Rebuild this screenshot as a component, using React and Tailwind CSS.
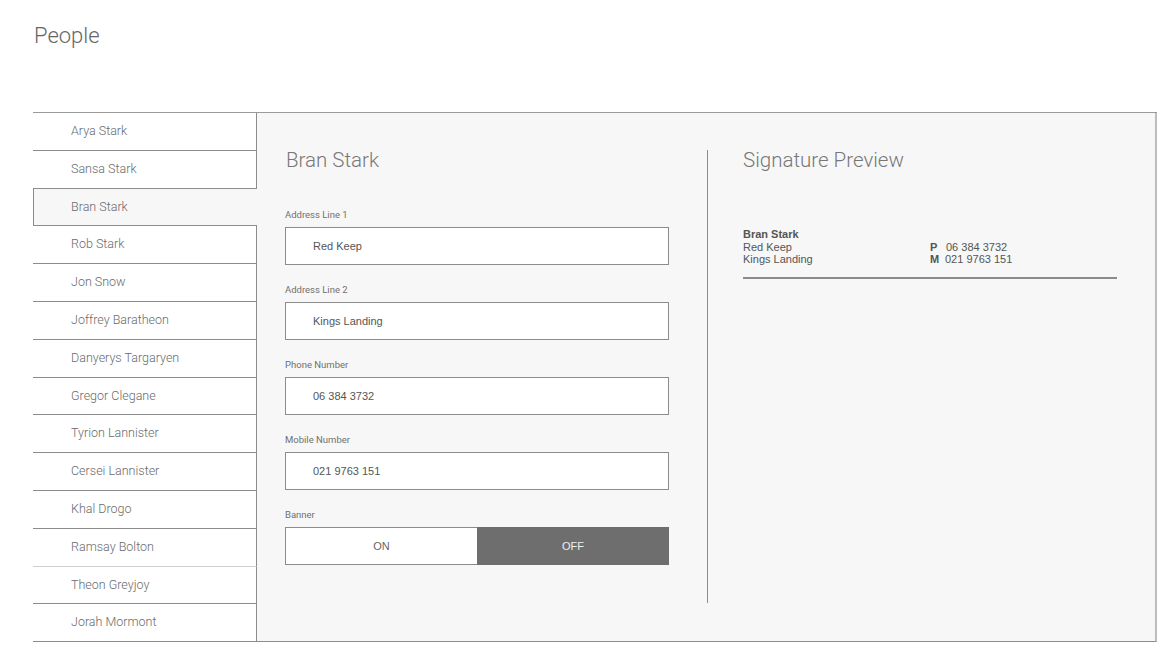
const people = [
  'Arya Stark',
  'Sansa Stark',
  'Bran Stark',
  'Rob Stark',
  'Jon Snow',
  'Joffrey Baratheon',
  'Danyerys Targaryen',
  'Gregor Clegane',
  'Tyrion Lannister',
  'Cersei Lannister',
  'Khal Drogo',
  'Ramsay Bolton',
  'Theon Greyjoy',
  'Jorah Mormont',
];

const fields = [
  { label: 'Address Line 1', value: 'Red Keep' },
  { label: 'Address Line 2', value: 'Kings Landing' },
  { label: 'Phone Number', value: '06 384 3732' },
  { label: 'Mobile Number', value: '021 9763 151' },
];

function PersonItem({ name, selected, light }) {
  if (selected) {
    return (
      <div className="h-[37.8px] flex items-center pl-[37px] bg-[#f7f7f7] border-l border-b border-[#8c8c8c] text-[12.5px] text-[#6b6b6b] font-light">
        {name}
      </div>
    );
  }
  return (
    <div
      className={
        'h-[37.8px] flex items-center pl-[38px] bg-white border-r border-r-[#8c8c8c] border-b text-[12.5px] text-[#6b6b6b] font-light ' +
        (light ? 'border-b-[#d0d0d0]' : 'border-b-[#8c8c8c]')
      }
    >
      {name}
    </div>
  );
}

function Label({ children }) {
  return <div className="text-[9.5px] leading-[12px] text-[#707070] mb-[6px]">{children}</div>;
}

function Field({ label, value }) {
  return (
    <div className="mb-[19px]">
      <Label>{label}</Label>
      <div className="h-[38px] border border-[#8c8c8c] bg-white flex items-center pl-[27px] text-[11px] text-[#555] font-['Liberation_Sans',Arial,sans-serif]">
        {value}
      </div>
    </div>
  );
}

export default function App() {
  return (
    <div className="min-h-screen bg-white font-['Roboto',sans-serif]">
      <h1 className="pl-[34px] pt-[24px] text-[22px] leading-[24px] font-light text-[#666]">People</h1>
      <div className="ml-[33px] mt-[64px] w-[1124px] flex border-t border-[#9a9a9a]">
        <div className="w-[224px]">
          {people.map((p) => (
            <PersonItem key={p} name={p} selected={p === 'Bran Stark'} light={p === 'Ramsay Bolton'} />
          ))}
        </div>
        <div className="flex-1 flex bg-[#f7f7f7] border-b border-b-[#8c8c8c] border-r-2 border-r-[#bdbdbd] pt-[37px] pl-[28px]">
          <div className="w-[384px]">
            <h2 className="text-[20.5px] leading-[20px] font-light text-[#777] pl-px">Bran Stark</h2>
            <div className="mt-[39px]">
              {fields.map((f) => (
                <Field key={f.label} label={f.label} value={f.value} />
              ))}
              <Label>Banner</Label>
              <div className="h-[38px] flex font-['Liberation_Sans',Arial,sans-serif] text-[11px]">
                <div className="w-1/2 bg-white border border-r-0 border-[#8c8c8c] flex items-center justify-center text-[#666]">
                  ON
                </div>
                <div className="w-1/2 bg-[#6e6e6e] flex items-center justify-center text-[#eee]">OFF</div>
              </div>
            </div>
          </div>
          <div className="ml-[38px] h-[453px] border-l border-[#8c8c8c] pl-[35px] w-[411px]">
            <h2 className="text-[20.5px] leading-[20px] font-light text-[#777]">Signature Preview</h2>
            <div className="mt-[58px] flex text-[11px] leading-[12.5px] text-[#555] font-['Liberation_Sans',Arial,sans-serif]">
              <div className="w-[187px]">
                <div className="font-bold">Bran Stark</div>
                <div>Red Keep</div>
                <div>Kings Landing</div>
              </div>
              <div>
                <div>&nbsp;</div>
                <div>
                  <span className="inline-block w-[16px] font-bold">P</span>06 384 3732
                </div>
                <div>
                  <span className="inline-block w-[15px] font-bold">M</span>021 9763 151
                </div>
              </div>
            </div>
            <div className="mt-[11px] w-[374px] h-[2px] bg-[#8c8c8c]"></div>
          </div>
        </div>
      </div>
    </div>
  );
}
